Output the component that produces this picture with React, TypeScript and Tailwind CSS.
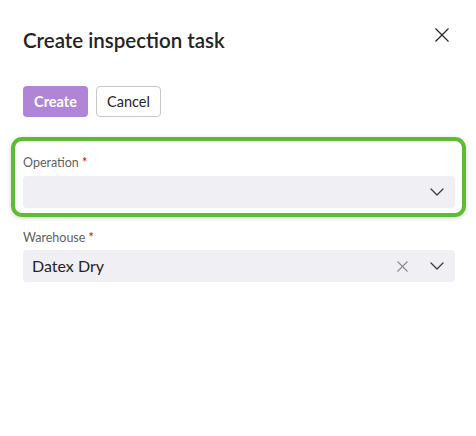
import React from "react";

function Chevron() {
  return (
    <svg width="14" height="8" viewBox="0 0 14 8" fill="none" className="shrink-0">
      <path d="M1 1l6 6 6-6" stroke="#3b3b3b" strokeWidth="1.3" strokeLinecap="round" strokeLinejoin="round" />
    </svg>
  );
}

function Cross({ size, color, width }: { size: number; color: string; width: number }) {
  return (
    <svg width={size} height={size} viewBox={`0 0 ${size} ${size}`} fill="none" className="shrink-0">
      <path d={`M0.5 0.5L${size - 0.5} ${size - 0.5}M${size - 0.5} 0.5L0.5 ${size - 0.5}`} stroke={color} strokeWidth={width} />
    </svg>
  );
}

function Label({ text }: { text: string }) {
  return (
    <div className="text-[12.5px] leading-4 text-[#616161]">
      {text} <span className="text-[#c4262e] font-semibold">*</span>
    </div>
  );
}

export default function App() {
  return (
    <div className="w-[476px] h-[436px] bg-white pt-[26px] pl-[23px] pr-[21px] font-['Lato',sans-serif]">
      <div className="flex items-start justify-between">
        <h2 className="text-[20.5px] leading-7 font-semibold text-[#242424]">Create inspection task</h2>
        <div className="mt-[2px] mr-[6px]">
          <Cross size={14} color="#242424" width={1.2} />
        </div>
      </div>

      <div className="mt-8 flex gap-2">
        <button className="h-[31px] w-[65px] rounded bg-[#b085d7] text-[14.5px] font-bold text-white">Create</button>
        <button className="h-[31px] w-[65px] rounded border border-[#c7c7c7] bg-white text-[14.5px] text-[#242424]">Cancel</button>
      </div>

      <div className="mt-5 -ml-3 -mr-[11px] rounded-[11px] border-4 border-[#5dbd32] pl-2 pr-[7px] pt-[14px] pb-[5px] shadow-[0_1px_4px_rgba(0,0,0,0.18)]">
        <Label text="Operation" />
        <div className="mt-[5px] flex h-8 items-center justify-end rounded bg-[#efeff4] pr-[11px]">
          <Chevron />
        </div>
      </div>

      <div className="mt-[13px]">
        <Label text="Warehouse" />
        <div className="mt-1 flex h-8 items-center rounded bg-[#efeff4] pl-[9px] pr-[11px]">
          <span className="flex-1 text-[16px] text-[#242424]">Datex Dry</span>
          <div className="mr-[22px]">
            <Cross size={11} color="#8a8a8a" width={1.1} />
          </div>
          <Chevron />
        </div>
      </div>
    </div>
  );
}
